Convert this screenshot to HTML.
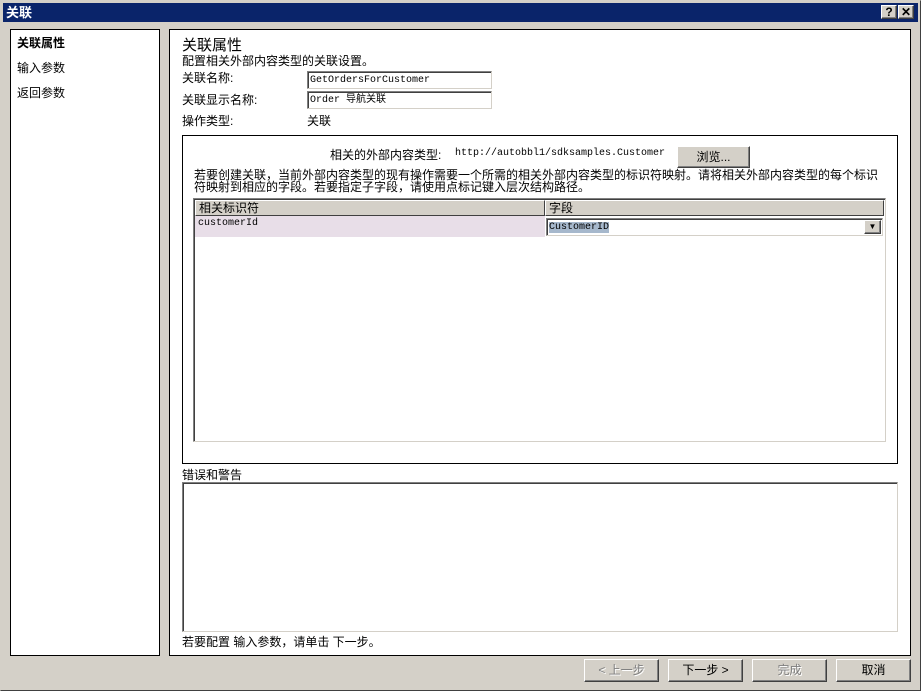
<!DOCTYPE html>
<html><head><meta charset="utf-8"><style>
*{margin:0;padding:0;box-sizing:border-box}
body{width:921px;height:691px;background:#d4d0c8;font-family:"Liberation Sans","Noto Sans CJK SC","WenQuanYi Zen Hei",sans-serif;font-size:12px;color:#000;position:relative;overflow:hidden}
.a{position:absolute;white-space:nowrap}
.mono{font-family:"Liberation Mono","Noto Sans CJK SC",monospace;font-size:10px}
.sunk{border:1px solid;border-color:#808080 #d4d0c8 #d4d0c8 #808080;box-shadow:inset 1px 1px 0 #404040}
.btn{position:absolute;background:#d4d0c8;border:1px solid;border-color:#fff #404040 #404040 #fff;box-shadow:inset -1px -1px 0 #808080;text-align:center;line-height:20px;font-size:12px}
</style></head><body>
<div class="a" style="left:0;top:0;width:921px;height:691px;border:1px solid;border-color:#d4d0c8 #404040 #404040 #d4d0c8"></div>
<div class="a" style="left:3px;top:3px;width:915px;height:19px;background:#0a246a;color:#fff;font-weight:bold;font-size:13px;line-height:19px;padding-left:3px">关联</div>
<div class="btn" style="left:881px;top:5px;width:16px;height:14px;line-height:12px;font-weight:bold;font-size:12px">?</div>
<div class="btn" style="left:898px;top:5px;width:16px;height:14px;line-height:12px;font-weight:bold;font-size:12px">✕</div>

<div class="a" style="left:10px;top:29px;width:150px;height:627px;background:#fff;border:1px solid #000"></div>
<div class="a" style="left:17px;top:34px;font-weight:bold">关联属性</div>
<div class="a" style="left:17px;top:59px">输入参数</div>
<div class="a" style="left:17px;top:84px">返回参数</div>

<div class="a" style="left:169px;top:29px;width:742px;height:627px;background:#fff;border:1px solid #000"></div>
<div class="a" style="left:182px;top:34px;font-size:15px">关联属性</div>
<div class="a" style="left:182px;top:52px">配置相关外部内容类型的关联设置。</div>
<div class="a" style="left:182px;top:69px">关联名称:</div>
<div class="a sunk mono" style="left:307px;top:71px;width:185px;height:18px;padding:2px 2px;line-height:13px">GetOrdersForCustomer</div>
<div class="a" style="left:182px;top:91px">关联显示名称:</div>
<div class="a sunk mono" style="left:307px;top:91px;width:185px;height:18px;padding:2px 2px;line-height:13px">Order 导航关联</div>
<div class="a" style="left:182px;top:112px">操作类型:</div>
<div class="a" style="left:307px;top:112px">关联</div>

<div class="a" style="left:182px;top:135px;width:716px;height:329px;border:1px solid #000"></div>
<div class="a" style="left:330px;top:146px">相关的外部内容类型:</div>
<div class="a mono" style="left:455px;top:148px">http://autobbl1/sdksamples.Customer</div>
<div class="btn" style="left:677px;top:146px;width:73px;height:22px">浏览...</div>
<div class="a" style="left:194px;top:169px;line-height:12px">若要创建关联，当前外部内容类型的现有操作需要一个所需的相关外部内容类型的标识符映射。请将相关外部内容类型的每个标识<br>符映射到相应的字段。若要指定子字段，请使用点标记键入层次结构路径。</div>
<div class="a sunk" style="left:193px;top:198px;width:693px;height:244px;background:#fff"></div>
<div class="a" style="left:195px;top:200px;width:350px;height:16px;background:#d4d0c8;border:1px solid;border-color:#fff #404040 #404040 #fff;padding-left:3px;line-height:14px">相关标识符</div>
<div class="a" style="left:545px;top:200px;width:339px;height:16px;background:#d4d0c8;border:1px solid;border-color:#fff #404040 #404040 #fff;padding-left:3px;line-height:14px">字段</div>
<div class="a mono" style="left:195px;top:216px;width:350px;height:21px;background:#e8dee8;padding:2px 3px">customerId</div>
<div class="a sunk mono" style="left:546px;top:218px;width:337px;height:18px;background:#fff;padding:2px 2px;line-height:13px"><span style="background:#a6b8cc">CustomerID</span></div>
<div class="btn" style="left:864px;top:220px;width:17px;height:14px;font-size:8px;line-height:12px">▼</div>

<div class="a" style="left:182px;top:466px">错误和警告</div>
<div class="a sunk" style="left:182px;top:482px;width:716px;height:150px;background:#fff"></div>
<div class="a" style="left:182px;top:633px">若要配置 输入参数，请单击 下一步。</div>

<div class="btn" style="left:584px;top:659px;width:75px;height:23px;color:#808080;text-shadow:1px 1px 0 #fff">&lt; 上一步</div>
<div class="btn" style="left:668px;top:659px;width:75px;height:23px">下一步 &gt;</div>
<div class="btn" style="left:752px;top:659px;width:75px;height:23px;color:#808080;text-shadow:1px 1px 0 #fff">完成</div>
<div class="btn" style="left:836px;top:659px;width:75px;height:23px">取消</div>
</body></html>
